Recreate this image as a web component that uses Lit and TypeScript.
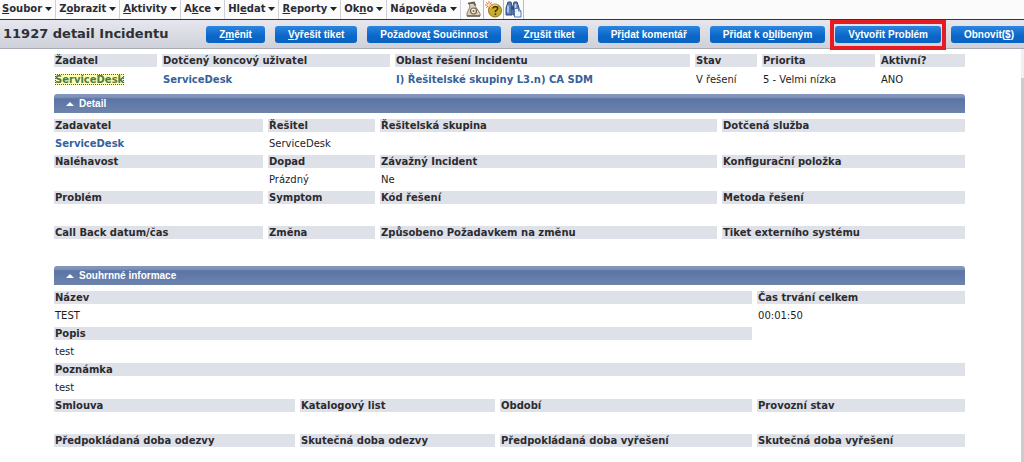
import { LitElement, html, css, svg, nothing } from "lit";
import { customElement, property, state } from "lit/decorators.js";

type Field = { label: string; value?: string; link?: boolean; focus?: boolean; span?: number };

/** Renders a caption with its access key underlined. */
const withKey = (text: string, at: number) =>
  html`${text.slice(0, at)}<u>${text.slice(at, at + 1)}</u>${text.slice(at + 1)}`;

const MENUS: [string, number][] = [
  ["Soubor", 0],
  ["Zobrazit", 1],
  ["Aktivity", 0],
  ["Akce", 1],
  ["Hledat", 2],
  ["Reporty", 0],
  ["Okno", 2],
  ["Nápověda", 2],
];

const ACTIONS: { text: string; key: number; marked?: boolean }[] = [
  { text: "Změnit", key: 1 },
  { text: "Vyřešit tiket", key: 0 },
  { text: "Požadovat Součinnost", key: 8 },
  { text: "Zrušit tiket", key: 2 },
  { text: "Přidat komentář", key: 2 },
  { text: "Přidat k oblíbeným", key: 10 },
  { text: "Vytvořit Problém", key: 1, marked: true },
  { text: "Obnovit($)", key: 8 },
];

const SUMMARY: Field[][] = [
  [
    { label: "Žadatel", value: "ServiceDesk", link: true, focus: true },
    { label: "Dotčený koncový uživatel", value: "ServiceDesk", link: true },
    { label: "Oblast řešení Incidentu", value: "I) Řešitelské skupiny L3.n) CA SDM", link: true },
    { label: "Stav", value: "V řešení" },
    { label: "Priorita", value: "5 - Velmi nízka" },
    { label: "Aktivní?", value: "ANO" },
  ],
];

const DETAIL: Field[][] = [
  [
    { label: "Zadavatel", value: "ServiceDesk", link: true },
    { label: "Řešitel", value: "ServiceDesk" },
    { label: "Řešitelská skupina" },
    { label: "Dotčená služba" },
  ],
  [
    { label: "Naléhavost" },
    { label: "Dopad", value: "Prázdný" },
    { label: "Závažný Incident", value: "Ne" },
    { label: "Konfigurační položka" },
  ],
  [{ label: "Problém" }, { label: "Symptom" }, { label: "Kód řešení" }, { label: "Metoda řešení" }],
  [
    { label: "Call Back datum/čas" },
    { label: "Změna" },
    { label: "Způsobeno Požadavkem na změnu" },
    { label: "Tiket externího systému" },
  ],
];

const OVERVIEW: Field[][] = [
  [
    { label: "Název", value: "TEST", span: 3 },
    { label: "Čas trvání celkem", value: "00:01:50" },
  ],
  [{ label: "Popis", value: "test", span: 3 }],
  [{ label: "Poznámka", value: "test", span: 4 }],
  [{ label: "Smlouva" }, { label: "Katalogový list" }, { label: "Období" }, { label: "Provozní stav" }],
  [
    { label: "Předpokládaná doba odezvy" },
    { label: "Skutečná doba odezvy" },
    { label: "Předpokládaná doba vyřešení" },
    { label: "Skutečná doba vyřešení" },
  ],
];

const ICONS = [
  {
    name: "Vytáčení",
    art: svg`
      <path d="M4 2.5 8.500 2l2 3.500L15 12.500v2.500H2v-3l3-6z" fill="#ddd0b8" stroke="#8a7a66"/>
      <path d="M3 2.500 9 1.500l1.500 3" fill="none" stroke="#5e564c" stroke-width="1.600"/>
      <circle cx="8.500" cy="10" r="3" fill="#f3ecdf" stroke="#6f6150" stroke-width="1.200"/>
      <circle cx="8.500" cy="10" r="1" fill="#6f6150"/>
      <path d="M2 15h13" stroke="#5e564c" stroke-width="1.200"/>`,
  },
  {
    name: "Nová otázka",
    art: svg`
      <circle cx="10" cy="9.500" r="6.500" fill="#c9ab2d" stroke="#8f7414"/>
      <path d="M5.500 7a5 5 0 0 1 7-2.500" fill="none" stroke="#f0dd80" stroke-width="1.500"/>
      <path d="M8 7.500q.3-2 2.500-2 2.300.2 2.200 2-.2 1.300-2.200 2.500v1.300M10.400 12.500v1.500" fill="none" stroke="#3f3408" stroke-width="1.600"/>
      <path d="M4 0v8M0 4h8M1.200 1.200l5.600 5.600M6.800 1.200 1.200 6.800" stroke="#e8743a" stroke-width="1"/>
      <circle cx="4" cy="4" r="1.600" fill="#ffe9a0"/>`,
  },
  {
    name: "Hledat dokumenty",
    art: svg`
      <path d="M3 1h3l1 4v9H1V7zM9 1h3l2 6v7H8V5z" fill="#5d7eb5" stroke="#2e4a7d"/>
      <path d="M6 5.500h3v3H6z" fill="#2e4a7d"/>
      <path d="M3 4.500v7M10.500 3v4" stroke="#c4d6f2" stroke-width="1.600"/>
      <path d="M9.500 7.500h4l2.500 2.500v6H9.500z" fill="#eef4ff" stroke="#5878ad"/>
      <path d="M13.500 7.500V10H16" fill="none" stroke="#5878ad"/>`,
  },
];

@customElement("field-table")
export class FieldTable extends LitElement {
  @property({ attribute: false }) rows: Field[][] = [];
  @property({ attribute: false }) columns: number[] = [];
  @property() caption = "";
  @property({ type: Boolean }) roomy = false;

  static styles = css`
    :host {
      display: block;
      margin: 0 -5px;
    }
    .fields {
      width: 100%;
      table-layout: fixed;
      border-spacing: 5px 0;
      border-collapse: separate;
    }
    .label,
    .value {
      box-sizing: border-box;
      padding: 0 0 0 1px;
      text-align: left;
      white-space: nowrap;
      line-height: 13px;
    }
    .label {
      height: 13px;
      background: #dfe1e8;
      color: #2b2b2f;
      font-weight: bold;
    }
    .value {
      height: 22px;
      color: #1d1d1d;
    }
    .filled .value {
      height: 23px;
      padding-bottom: 1px;
    }
    .roomy .value {
      height: 25px;
    }
    .link {
      color: #35619c;
      font-weight: bold;
      text-decoration: none;
    }
    .focus {
      background: #ffffb0;
      color: #4b7a4c;
      outline: 1px dotted #4d6a2a;
      outline-offset: -1px;
    }
  `;

  private content(f: Field) {
    if (!f.value) return nothing;
    return f.link
      ? html`<a class="link ${f.focus ? "focus" : ""}" href="#">${f.value}</a>`
      : f.value;
  }

  render() {
    return html`<table class="fields ${this.roomy ? "roomy" : ""}" aria-label=${this.caption}>
      <colgroup>
        ${this.columns.map((w) => html`<col style="width:${w}px" />`)}
      </colgroup>
      ${this.rows.map(
        (row) => html`<tbody class=${row.some((f) => f.value) && !this.roomy ? "filled" : ""}>
          <tr>
            ${row.map((f) => html`<th class="label" colspan=${f.span ?? 1}>${f.label}</th>`)}
          </tr>
          <tr>
            ${row.map((f) => html`<td class="value" colspan=${f.span ?? 1}>${this.content(f)}</td>`)}
          </tr>
        </tbody>`,
      )}
    </table>`;
  }
}

@customElement("fold-section")
export class FoldSection extends LitElement {
  @property() heading = "";
  @state() private open = true;

  static styles = css`
    :host {
      display: block;
    }
    .bar {
      display: flex;
      align-items: center;
      gap: 5px;
      width: 100%;
      height: 19px;
      margin: 0 0 6px;
      padding: 0 12px;
      border: 0;
      border-radius: 3px 3px 0 0;
      background: linear-gradient(#8496bb 0, #8092b8 3px, #5b74a4 5px, #6d84ad 100%);
      color: #fff;
      font: bold 10px/19px "Liberation Sans", Arial, sans-serif;
    }
    .arrow {
      width: 8px;
      height: 4px;
      fill: #fff;
    }
  `;

  render() {
    return html`
      <button class="bar" aria-expanded=${this.open} @click=${() => (this.open = !this.open)}>
        <svg class="arrow" viewBox="0 0 8 4"><path d="M4 0 8 4H0z" /></svg>${this.heading}
      </button>
      ${this.open ? html`<slot></slot>` : nothing}
    `;
  }
}

@customElement("app-root")
export class AppRoot extends LitElement {
  static styles = css`
    :host {
      display: flex;
      flex-direction: column;
      min-height: 100vh;
      overflow: hidden;
      background: #fff;
      font: 10px/13px Verdana, "DejaVu Sans", sans-serif;
    }
    .menu {
      display: flex;
      height: 19px;
      border-bottom: 1px solid #33353c;
      background: #fbfbfc;
    }
    .item {
      display: flex;
      align-items: center;
      gap: 3px;
      padding: 0 3px 1px 3px;
      border: 0;
      border-right: 1px solid #cfd0d8;
      background: none;
      color: #2b2b33;
      font: bold 10px/18px Verdana, "DejaVu Sans", sans-serif;
    }
    .item:first-child {
      padding-left: 2px;
    }
    .caret {
      width: 7px;
      height: 4px;
      fill: #222;
    }
    .tool {
      display: flex;
      align-items: center;
      padding: 0 1px;
      border: 0;
      border-right: 1px solid #b9bac4;
      background: none;
    }
    .glyph {
      width: 17px;
      height: 17px;
    }
    .tools {
      display: flex;
      margin-left: 3px;
    }
    .header {
      display: flex;
      align-items: center;
      justify-content: space-between;
      height: 28px;
      padding-left: 3px;
      border-bottom: 1px solid #a9abb3;
      background: linear-gradient(#e6e7ee, #cfd1da);
      white-space: nowrap;
    }
    .title {
      margin: 0;
      color: #2f3036;
      font: bold 13px/18px Verdana, "DejaVu Sans", sans-serif;
    }
    .actions {
      display: flex;
      gap: 10px;
      margin-right: -3px;
    }
    .slot {
      position: relative;
    }
    .marked::after {
      content: "";
      position: absolute;
      inset: -6px -5px -7px -5px;
      border: 4px solid #e51c23;
      pointer-events: none;
    }
    .action {
      height: 17px;
      padding: 0 13px;
      border: 0;
      border-radius: 3px;
      background: linear-gradient(#2b86e0, #0a66c8 60%, #0b63c0);
      color: #fff;
      font: bold 10px/17px "Liberation Sans", Arial, sans-serif;
    }
    .body {
      display: flex;
      flex: 1;
    }
    .content {
      flex: 1;
      min-width: 0;
      padding: 5px 56px 0 54px;
    }
    .summary {
      margin-bottom: 2px;
    }
    .detail {
      margin-bottom: 5px;
    }
    .track {
      width: 3px;
      background: #f0f0f0;
    }
    .thumb {
      height: 100%;
      margin-top: 29px;
      background: #cdcdcd;
    }
  `;

  render() {
    return html`
      <nav class="menu">
        ${MENUS.map(
          ([text, key]) => html`<button class="item">
            <span>${withKey(text, key)}</span>
            <svg class="caret" viewBox="0 0 7 4"><path d="M0 0h7L3.500 4z" /></svg>
          </button>`,
        )}
        <div class="tools">
          ${ICONS.map(
            (i) => html`<button class="tool" aria-label=${i.name}>
              <svg class="glyph" viewBox="0 0 17 17">${i.art}</svg>
            </button>`,
          )}
        </div>
      </nav>
      <header class="header">
        <h1 class="title">11927 detail Incidentu</h1>
        <div class="actions">
          ${ACTIONS.map(
            (a) => html`<div class="slot ${a.marked ? "marked" : ""}">
              <button class="action">${withKey(a.text, a.key)}</button>
            </div>`,
          )}
        </div>
      </header>
      <div class="body">
        <main class="content">
          <field-table
            class="summary"
            caption="Incident"
            roomy
            .rows=${SUMMARY}
            .columns=${[103, 228, 295, 62, 113, 85]}
          ></field-table>
          <fold-section class="detail" heading="Detail">
            <field-table caption="Detail" .rows=${DETAIL} .columns=${[209, 107, 337, 243]}></field-table>
          </fold-section>
          <fold-section heading="Souhrnné informace">
            <field-table
              caption="Souhrnné informace"
              .rows=${OVERVIEW}
              .columns=${[241, 195, 252, 208]}
            ></field-table>
          </fold-section>
        </main>
        <div class="track"><div class="thumb"></div></div>
      </div>
    `;
  }
}
